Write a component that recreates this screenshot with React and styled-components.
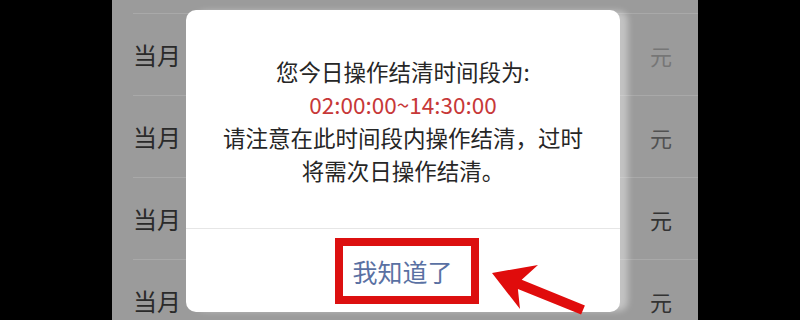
import styled, { createGlobalStyle } from "styled-components";

const GlobalStyle = createGlobalStyle`
  html, body {
    margin: 0;
    padding: 0;
    background: #000;
  }
  body {
    font-family: "Noto Sans CJK SC", "Noto Sans", sans-serif;
  }
`

const Stage = styled.div`
    width: 800px;
    height: 320px;
    overflow: hidden;
    display: flex;
    background: #000;
`
const Phone = styled.div`
    position: relative;
    margin-left: 112px;
    width: 586px;
    height: 320px;
    background: #9b9b9b;
    overflow: hidden;
`
const List = styled.ul`
    list-style: none;
    margin: 0;
    padding: 13px 0 0 21px;
`
const Row = styled.li`
    display: flex;
    align-items: center;
    justify-content: space-between;
    height: 82px;
    box-sizing: border-box;
    padding-right: 26px;
    border-top: 1px solid #a9a9a9;
`
const Label = styled.span`
    font-size: 24px;
    color: #2a2a2a;
`
const Amount = styled.span`
    font-size: 22px;
    color: #333;
    opacity: ${p => p.$fade};
`
const Modal = styled.div`
    position: absolute;
    left: 74px;
    top: 10px;
    width: 434px;
    height: 302px;
    background: #fff;
    border-radius: 10px;
    box-shadow: 9px 0 6px -1px rgba(255,255,255,.4);
    display: flex;
    flex-direction: column;
`
const Body = styled.div`
    height: 218px;
    box-sizing: border-box;
    padding-top: 45px;
    text-align: center;
`
const Line = styled.p`
    margin: 0;
    font-size: 22.5px;
    line-height: 33px;
    color: ${p => p.$red ? "#c73838" : "#262626"};
`
const Footer = styled.div`
    flex: 1;
    display: flex;
    align-items: center;
    justify-content: center;
    border-top: 1px solid #e6e6e6;
`
const Highlight = styled.span`
    margin-left: 8px;
    border: 8px solid #dc1010;
    padding: 0 18px 0 9px;
    line-height: 50px;
    font-size: 25px;
    color: #5a71a3;
`
const Arrow = styled.svg`
    position: absolute;
    left: 368px;
    top: 255px;
    width: 110px;
    height: 65px;
`

const rows = [
    { fade: 0.35 },
    { fade: 0.7 },
    { fade: 1 },
    { fade: 1 },
]

function App () {
    return(
        <Stage>
            <GlobalStyle/>
            <Phone>
                <List>
                    {rows.map((r, i) => (
                        <Row key={i}>
                            <Label>当月</Label>
                            <Amount $fade={r.fade}>元</Amount>
                        </Row>
                    ))}
                </List>
                <Modal>
                    <Body>
                        <Line>您今日操作结清时间段为:</Line>
                        <Line $red>02:00:00~14:30:00</Line>
                        <Line>请注意在此时间段内操作结清，过时</Line>
                        <Line>将需次日操作结清。</Line>
                    </Body>
                    <Footer>
                        <Highlight>我知道了</Highlight>
                    </Footer>
                </Modal>
                <Arrow viewBox="0 0 110 65">
                    <path d="M12 18 L58 10 L41.7 24.7 L104.9 50.4 L101.1 59.6 L37.9 33.9 L40 54 Z" fill="#e00c0c"/>
                </Arrow>
            </Phone>
        </Stage>
    )
}

export default App;
